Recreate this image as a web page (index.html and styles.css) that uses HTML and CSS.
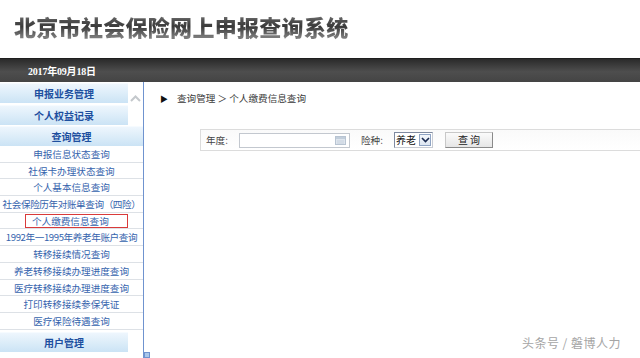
FILE: index.html
```html
<!DOCTYPE html>
<html lang="zh-CN">
<head>
<meta charset="utf-8">
<title>北京市社会保险网上申报查询系统</title>
<link rel="stylesheet" href="styles.css">
</head>
<body>
<div class="page">
  <header class="header">
    <h1 class="title">北京市社会保险网上申报查询系统</h1>
  </header>
  <div class="datebar"><span class="date">2017年09月18日</span></div>
  <div class="layout">
    <aside class="sidebar">
      <div class="topgroup">
        <div class="topheads">
          <div class="mhead first">申报业务管理</div>
          <div class="mhead">个人权益记录</div>
        </div>
        <div class="collapse">
          <svg width="11" height="7" viewBox="0 0 11 7"><polyline points="1,6 5.5,1.5 10,6" fill="none" stroke="#c4c8cc" stroke-width="2"/></svg>
        </div>
      </div>
      <div class="mhead full">查询管理</div>
      <ul class="items">
        <li>申报信息状态查询</li>
        <li>社保卡办理状态查询</li>
        <li>个人基本信息查询</li>
        <li class="tight">社会保险历年对账单查询（四险）</li>
        <li><span class="current">个人缴费信息查询</span></li>
        <li class="tight">1992年一1995年养老年账户查询</li>
        <li>转移接续情况查询</li>
        <li>养老转移接续办理进度查询</li>
        <li>医疗转移接续办理进度查询</li>
        <li>打印转移接续参保凭证</li>
        <li>医疗保险待遇查询</li>
      </ul>
      <div class="mhead last">用户管理</div>
      <span class="scrollbit"></span>
    </aside>
    <main class="main">
      <div class="crumb"><span class="arrow">▶</span><span class="crumbtext">查询管理 ＞ 个人缴费信息查询</span></div>
      <div class="formbox">
        <span class="label">年度:</span>
        <span class="input">
          <svg class="cal" width="11" height="9" viewBox="0 0 11 9"><rect x="0.5" y="0.5" width="10" height="8" fill="#dfe6ee" stroke="#b8c4d2"/><rect x="1" y="1" width="9" height="2" fill="#c2cedb"/><line x1="2" y1="5" x2="9" y2="5" stroke="#c8d2de"/><line x1="2" y1="7" x2="9" y2="7" stroke="#c8d2de"/></svg>
        </span>
        <span class="label second">险种:</span>
        <span class="select"><span class="seltext">养老</span><span class="selbtn"><svg width="9" height="6" viewBox="0 0 9 6"><polyline points="1,1 4.5,4.5 8,1" fill="none" stroke="#1a2a50" stroke-width="1.6"/></svg></span></span>
        <span class="button">查 询</span>
      </div>
    </main>
  </div>
  <div class="watermark">头条号 / 磐博人力</div>
</div>
</body>
</html>
```
FILE: styles.css
```css
html, body {
  margin: 0;
  padding: 0;
  background: #ffffff;
}
body {
  font-family: "Noto Sans CJK SC", "Liberation Sans", sans-serif;
  width: 640px;
  height: 358px;
  overflow: hidden;
}
.page {
  position: relative;
  width: 640px;
  height: 358px;
  overflow: hidden;
}
.header {
  height: 58px;
  padding-left: 14px;
  box-sizing: border-box;
  background: #ffffff;
}
.title {
  margin: 0;
  padding-top: 11px;
  font-size: 22px;
  line-height: 30px;
  font-weight: 900;
  letter-spacing: 0.3px;
  background: linear-gradient(#b0b0b0 20%, #505050 50%, #3a3a3a 65%, #7a7a7a 90%);
  -webkit-background-clip: text;
  background-clip: text;
  color: transparent;
  display: inline-block;
}
.datebar {
  height: 24px;
  background: linear-gradient(#2a2a2a, #4e4e4e 55%, #444 100%);
  border-top: 1px solid #1e1e1e;
  box-sizing: border-box;
  padding-left: 28px;
  display: flex;
  align-items: center;
}
.date {
  color: #ffffff;
  font-family: "Liberation Serif", "Noto Sans CJK SC", serif;
  font-weight: bold;
  font-size: 10px;
  letter-spacing: -0.2px;
}
.layout {
  display: flex;
  height: 276px;
}
.sidebar {
  position: relative;
  width: 143px;
  border-right: 1px solid #6f93cf;
  display: flex;
  flex-direction: column;
  background: #ffffff;
}
.topgroup {
  display: flex;
}
.topheads {
  width: 128px;
}
.collapse {
  flex: 1;
  display: flex;
  justify-content: center;
  padding-top: 13px;
  box-sizing: border-box;
}
.mhead {
  height: 20px;
  line-height: 20px;
  margin-top: 2px;
  text-align: center;
  font-size: 10px;
  font-weight: bold;
  color: #1d4f9f;
  background: linear-gradient(#eef6fd, #d9ebf8 60%, #cbe3f5);
  border-top: 1px solid #f6fbff;
  box-sizing: border-box;
}
.mhead.first {
  margin-top: 1px;
}
.mhead.full {
  margin-top: 1px;
}
.mhead.last {
  width: 128px;
  margin-top: 2px;
}
.items {
  list-style: none;
  margin: 0;
  padding: 0;
}
.items li {
  height: 16.7px;
  box-sizing: border-box;
  border-bottom: 1px solid #dde1e6;
  padding-top: 2px;
  text-align: center;
  font-size: 9.6px;
  line-height: 13.7px;
  color: #3563ad;
  white-space: nowrap;
}
.items li.tight {
  letter-spacing: -0.4px;
}
.current {
  display: inline-block;
  width: 103px;
  height: 14px;
  line-height: 12px;
  border: 1px solid #d93a3a;
  box-sizing: border-box;
  margin-left: 10px;
  margin-top: -1px;
  padding-left: 6px;
  text-align: left;
  vertical-align: top;
}
.scrollbit {
  position: absolute;
  right: -7px;
  bottom: 0;
  width: 6px;
  height: 6px;
  background: #a9c7ea;
  border: 1px solid #6f93cf;
  box-sizing: border-box;
}
.main {
  flex: 1;
  display: flex;
  flex-direction: column;
}
.crumb {
  margin-top: 9px;
  height: 14px;
  padding-left: 16px;
  display: flex;
  align-items: center;
  font-size: 9.6px;
  color: #333333;
}
.arrow {
  font-size: 8px;
  width: 17px;
  color: #111;
}
.crumbtext {
  color: #3a3a3a;
}
.formbox {
  margin-top: 24px;
  margin-left: 56px;
  height: 22px;
  border: 1px solid #dcdcdc;
  border-right: none;
  box-sizing: border-box;
  background: linear-gradient(#fafafa, #ffffff);
  display: flex;
  align-items: center;
  padding-left: 5px;
  font-size: 9.6px;
  color: #444;
}
.label {
  width: 33px;
}
.label.second {
  width: 33px;
  margin-left: 11px;
}
.input {
  position: relative;
  width: 111px;
  height: 15px;
  border: 1px solid #c3c8cf;
  box-sizing: border-box;
  background: #fff;
}
.cal {
  position: absolute;
  right: 3px;
  top: 2px;
}
.select {
  display: flex;
  align-items: center;
  width: 39px;
  height: 16px;
  border: 1px solid #7f8aa0;
  border-right-color: #c8ccd4;
  border-bottom-color: #c8ccd4;
  box-sizing: border-box;
  background: #fff;
}
.seltext {
  flex: 1;
  font-size: 10px;
  line-height: 14px;
  color: #111;
  padding-left: 1px;
}
.selbtn {
  width: 12px;
  height: 12px;
  margin-right: 1px;
  border: 1px solid #8fa4c4;
  box-sizing: border-box;
  background: linear-gradient(#f4f7fb, #dde6f2);
  display: flex;
  align-items: center;
  justify-content: center;
}
.button {
  margin-left: 12px;
  width: 48px;
  height: 16px;
  box-sizing: border-box;
  border: 1px solid #8a8a8a;
  border-top-color: #c8c8c8;
  border-left-color: #c8c8c8;
  background: linear-gradient(#fbfbfb, #e6e6e6);
  text-align: center;
  font-size: 10px;
  line-height: 14px;
  color: #222;
}
.watermark {
  position: absolute;
  right: 19px;
  bottom: 7px;
  font-size: 12px;
  color: #a5a5a5;
  letter-spacing: 0.5px;
  text-shadow: 0 0 1px #fff;
}
```
